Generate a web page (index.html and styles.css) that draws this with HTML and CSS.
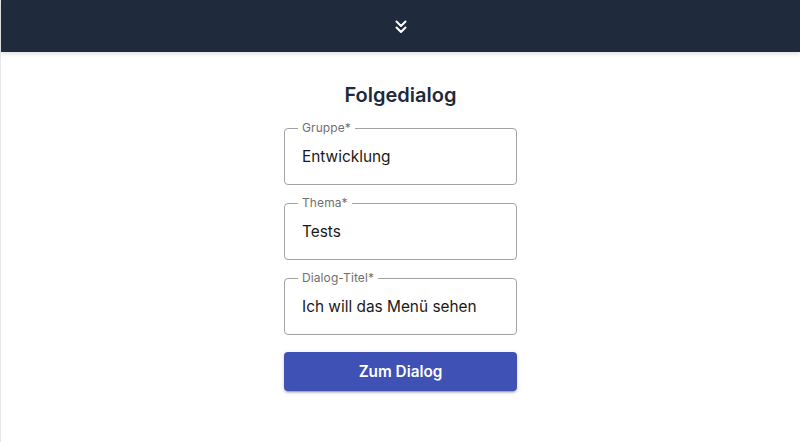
FILE: index.html
```html
<!DOCTYPE html>
<html lang="de">
<head>
<meta charset="utf-8">
<title>Folgedialog</title>
<link rel="stylesheet" href="styles.css">
</head>
<body>
<div class="page">
  <header class="topbar">
    <svg class="chev" width="16" height="16" viewBox="0 0 16 16" fill="none" stroke="#fff" stroke-width="2" stroke-linecap="round" stroke-linejoin="round">
      <path d="M3.5 2.5 L8 7 L12.5 2.5"/>
      <path d="M3.5 8.5 L8 13 L12.5 8.5"/>
    </svg>
  </header>
  <main class="content">
    <h1 class="title">Folgedialog</h1>
    <form class="form">
      <fieldset class="field">
        <legend class="label">Gruppe*</legend>
        <div class="value">Entwicklung</div>
      </fieldset>
      <fieldset class="field">
        <legend class="label">Thema*</legend>
        <div class="value">Tests</div>
      </fieldset>
      <fieldset class="field">
        <legend class="label">Dialog-Titel*</legend>
        <div class="value">Ich will das Menü sehen</div>
      </fieldset>
      <button type="button" class="btn">Zum Dialog</button>
    </form>
  </main>
</div>
</body>
</html>
```
FILE: styles.css
```css
* { box-sizing: border-box; }
html, body { margin: 0; padding: 0; height: 100%; }
body {
  font-family: Inter, "Noto Sans", sans-serif;
  background: #fff;
  color: #1f2937;
}
.page {
  min-height: 442px;
  border-left: 1px solid #e5e7eb;
}
.topbar {
  height: 52px;
  background: #1f2a3d;
  display: flex;
  align-items: center;
  justify-content: center;
  box-shadow: 0 2px 4px rgba(0,0,0,0.12);
  padding-top: 2px;
}
.chev { display: block; }
.content {
  display: flex;
  flex-direction: column;
  align-items: center;
  padding-top: 30px;
}
.title {
  margin: 0;
  font-size: 20px;
  font-weight: 600;
  line-height: 26px;
  color: #1e293b;
}
.form {
  margin-top: 14px;
  width: 233px;
  display: flex;
  flex-direction: column;
  gap: 12px;
}
.field {
  margin: 0;
  height: 63px;
  border: 1px solid #a3a3a3;
  border-radius: 4px;
  padding: 0 13px;
}
.label {
  font-size: 12px;
  color: #707070;
  padding: 0 4px;
  margin-left: 0;
  line-height: 12px;
  letter-spacing: 0.1px;
}
.value {
  font-size: 15.4px;
  color: #1a1a1a;
  padding-left: 4px;
  margin-top: 13px;
  line-height: 20px;
}
.btn {
  margin-top: 5px;
  height: 39px;
  border: none;
  border-radius: 4px;
  background: #3f51b5;
  color: #fff;
  font-family: Inter, "Noto Sans", sans-serif;
  font-size: 15.3px;
  font-weight: 600;
  box-shadow: 0 3px 1px -2px rgba(0,0,0,0.2), 0 2px 2px 0 rgba(0,0,0,0.14), 0 1px 5px 0 rgba(0,0,0,0.12);
}
```
